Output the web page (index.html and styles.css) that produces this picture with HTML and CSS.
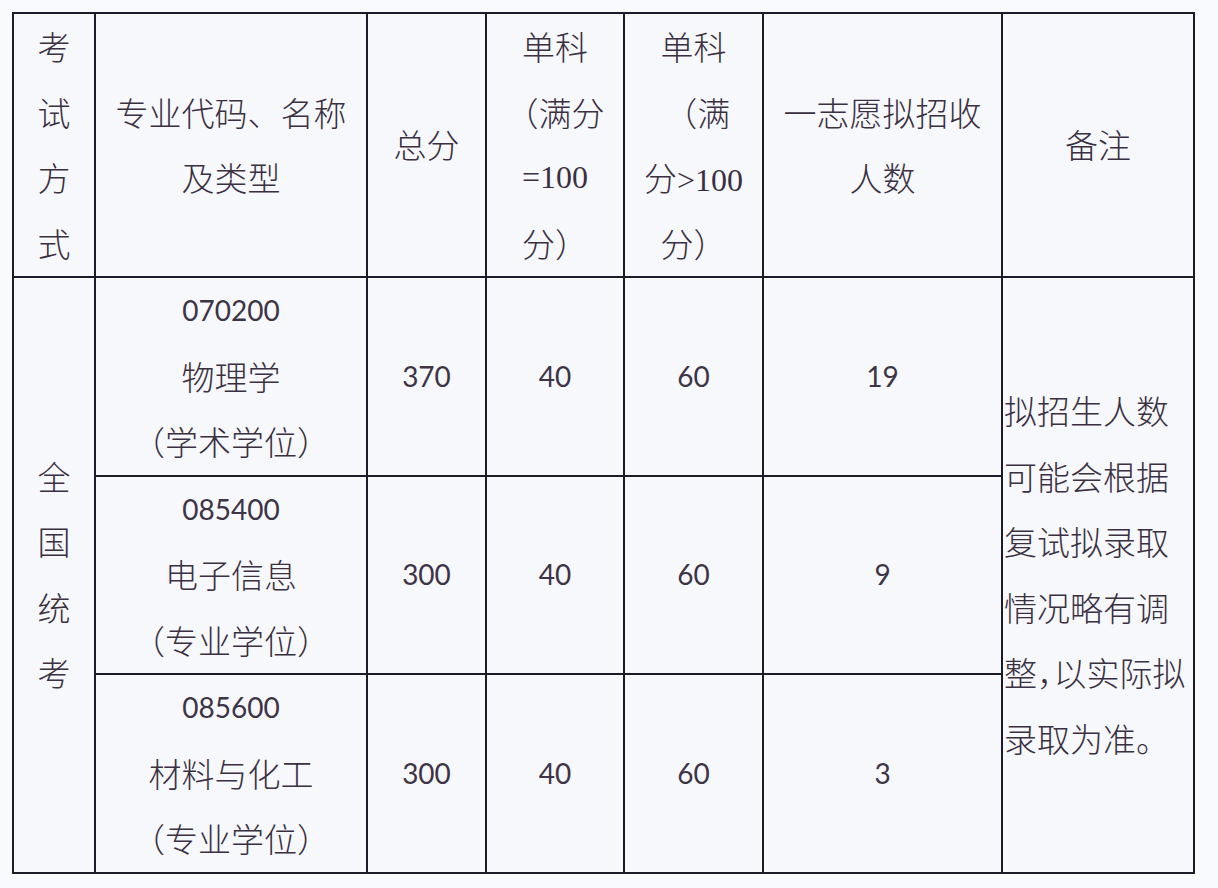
FILE: index.html
```html
<!DOCTYPE html>
<html lang="zh-CN">
<head>
<meta charset="utf-8">
<title>招生计划</title>
<link rel="stylesheet" href="styles.css">
</head>
<body>
<div class="page">
<table class="plan">
  <colgroup>
    <col class="c1"><col class="c2"><col class="c3"><col class="c4"><col class="c5"><col class="c6"><col class="c7">
  </colgroup>
  <tr class="head">
    <td><span class="ln">考</span><span class="ln">试</span><span class="ln">方</span><span class="ln">式</span></td>
    <td><span class="ln">专业代码、名称</span><span class="ln">及类型</span></td>
    <td><span class="ln">总分</span></td>
    <td><span class="ln">单科</span><span class="ln">（满分</span><span class="ln ser">=100</span><span class="ln">分）</span></td>
    <td><span class="ln">单科</span><span class="ln">&nbsp;（满</span><span class="ln">分<span class="ser">&gt;100</span></span><span class="ln">分）</span></td>
    <td><span class="ln">一志愿拟招收</span><span class="ln">人数</span></td>
    <td><span class="ln">备注</span></td>
  </tr>
  <tr class="row">
    <td rowspan="3"><span class="ln">全</span><span class="ln">国</span><span class="ln">统</span><span class="ln">考</span></td>
    <td><span class="ln num">070200</span><span class="ln">物理学</span><span class="ln">（学术学位）</span></td>
    <td><span class="ln num">370</span></td>
    <td><span class="ln num">40</span></td>
    <td><span class="ln num">60</span></td>
    <td><span class="ln num">19</span></td>
    <td rowspan="3" class="note"><span class="ln">拟招生人数</span><span class="ln">可能会根据</span><span class="ln">复试拟录取</span><span class="ln">情况略有调</span><span class="ln">整<span class="comma">，</span>以实际拟</span><span class="ln">录取为准。</span></td>
  </tr>
  <tr class="row">
    <td><span class="ln num">085400</span><span class="ln">电子信息</span><span class="ln">（专业学位）</span></td>
    <td><span class="ln num">300</span></td>
    <td><span class="ln num">40</span></td>
    <td><span class="ln num">60</span></td>
    <td><span class="ln num">9</span></td>
  </tr>
  <tr class="row">
    <td><span class="ln num">085600</span><span class="ln">材料与化工</span><span class="ln">（专业学位）</span></td>
    <td><span class="ln num">300</span></td>
    <td><span class="ln num">40</span></td>
    <td><span class="ln num">60</span></td>
    <td><span class="ln num">3</span></td>
  </tr>
</table>
</div>
</body>
</html>
```
FILE: styles.css
```css
html, body {
  margin: 0;
  padding: 0;
  background: #f9fafe;
}
.page {
  padding: 12px 0 0 12px;
}
.plan {
  border-collapse: collapse;
  table-layout: fixed;
  width: 1181px;
  background: #f7f8fc;
  font-family: "Noto Sans CJK SC", "Noto Sans", sans-serif;
  font-weight: 300;
  font-size: 33px;
  line-height: 65.5px;
  color: #3a3042;
}
.c1 { width: 82px; }
.c2 { width: 272px; }
.c3 { width: 119px; }
.c4 { width: 138px; }
.c5 { width: 139px; }
.c6 { width: 239px; }
.c7 { width: 192px; }
.plan td {
  border: 2px solid #1d1a29;
  padding: 0;
  text-align: center;
  vertical-align: middle;
  white-space: nowrap;
  overflow: visible;
}
.ln {
  display: block;
  height: 65.5px;
  line-height: 65.5px;
}
.num {
  font-family: Lato, "Liberation Sans", sans-serif;
  font-weight: 400;
  font-size: 28px;
  color: #3d3446;
}
.ser {
  font-family: "Liberation Serif", serif;
  font-weight: 400;
  font-size: 32px;
}
.plan td.note {
  text-align: left;
  padding-left: 1px;
}
.comma {
  font-feature-settings: "halt" 1;
}
```
